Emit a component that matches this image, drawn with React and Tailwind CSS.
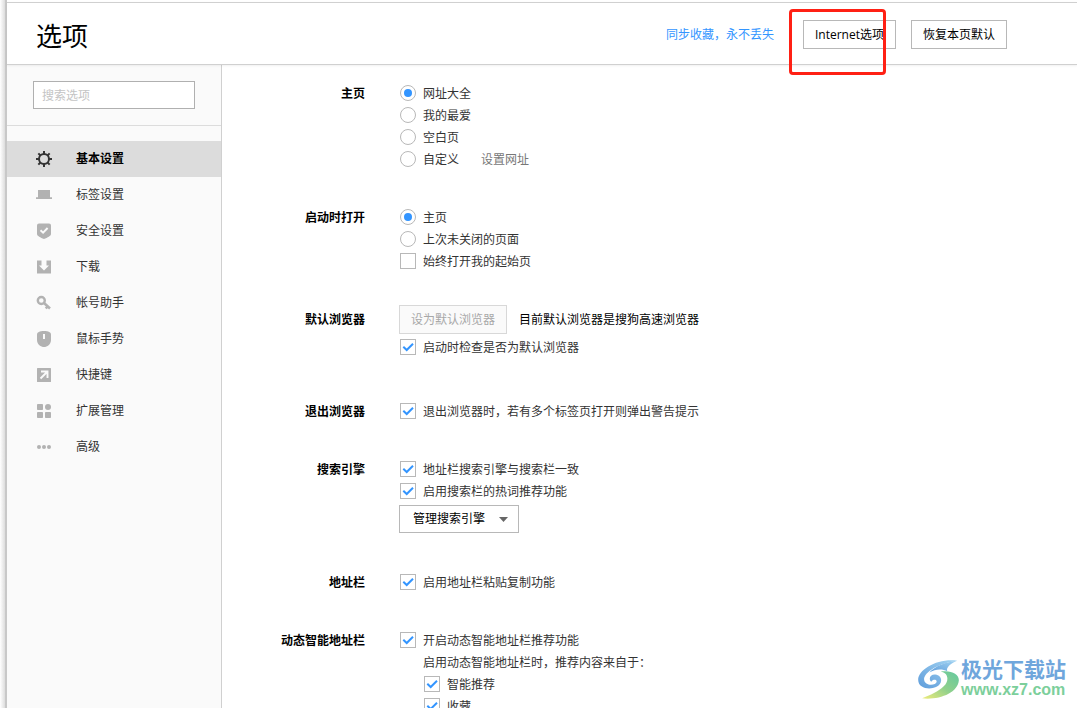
import React, { useState } from 'react';

const menuItems = [
  { id: 'basic', label: '基本设置' },
  { id: 'tabs', label: '标签设置' },
  { id: 'security', label: '安全设置' },
  { id: 'download', label: '下载' },
  { id: 'account', label: '帐号助手' },
  { id: 'mouse', label: '鼠标手势' },
  { id: 'shortcut', label: '快捷键' },
  { id: 'extension', label: '扩展管理' },
  { id: 'advanced', label: '高级' }
];

const MenuIcon = ({ id }) => (
  <svg viewBox="0 0 16 16" fill="currentColor" className="w-4 h-4" aria-hidden="true">
    {id === 'basic' && (
      <>
        <circle cx="8" cy="8" r="5" fill="none" stroke="currentColor" strokeWidth="2" />
        {[0, 45, 90, 135, 180, 225, 270, 315].map(angle => (
          <rect key={angle} x="7" y="0" width="2" height="3" transform={`rotate(${angle} 8 8)`} />
        ))}
      </>
    )}
    {id === 'tabs' && <path d="M2 3h12v7.300h2V12H0v-1.700h2z" />}
    {id === 'security' && (
      <>
        <path d="M3 0.500h10a2 2 0 0 1 2 2V11c0 2-3.500 3.600-7 5-3.500-1.400-7-3-7-5V2.500a2 2 0 0 1 2-2z" />
        <path d="M4.500 7.200l2.600 2.500 4.500-4.700" fill="none" stroke="#fafafa" strokeWidth="1.900" />
      </>
    )}
    {id === 'download' && <path d="M1 1.500h4.500V6.500H3L8 11.500 13 6.500h-2.500V1.500H15v13H1z" />}
    {id === 'account' && (
      <>
        <circle cx="5.300" cy="5.500" r="3.500" fill="none" stroke="currentColor" strokeWidth="2.400" />
        <path d="M8 8l6 5.500M11.500 11.500l-1.700 2" fill="none" stroke="currentColor" strokeWidth="2.600" />
      </>
    )}
    {id === 'mouse' && (
      <>
        <path d="M1 3.500C1 1.500 3.500 0 8 0s7 1.500 7 3.500V9c0 4.500-4 7-7 7s-7-2.500-7-7z" />
        <rect x="7" y="3" width="2" height="5" fill="#fafafa" />
      </>
    )}
    {id === 'shortcut' && (
      <>
        <rect x="1" y="1" width="14" height="14" rx="0.500" />
        <path d="M5 4.500h6.500V11M11 5l-6.500 6.500" fill="none" stroke="#fafafa" strokeWidth="1.900" />
      </>
    )}
    {id === 'extension' && (
      <>
        <rect x="1" y="1" width="6" height="6" rx="0.800" />
        <circle cx="12" cy="4" r="3" />
        <rect x="1" y="9" width="6" height="6" rx="0.800" />
        <rect x="9" y="9" width="6" height="6" rx="0.800" />
      </>
    )}
    {id === 'advanced' && (
      <>
        <circle cx="3" cy="8" r="2" />
        <circle cx="8" cy="8" r="2" />
        <circle cx="13" cy="8" r="2" />
      </>
    )}
  </svg>
);

const Radio = ({ name, label, defaultChecked }) => (
  <label className="flex items-center gap-[7px] h-[22px] pl-px">
    <span className="grid">
      <input
        type="radio"
        name={name}
        defaultChecked={defaultChecked}
        className="peer col-start-1 row-start-1 appearance-none w-4 h-4 rounded-full border border-[#b8b8b8] bg-white"
      />
      <svg viewBox="0 0 16 16" className="col-start-1 row-start-1 w-4 h-4 hidden peer-checked:block pointer-events-none">
        <circle cx="8" cy="8" r="4" fill="#3395ff" />
      </svg>
    </span>
    <span className="pt-0.5">{label}</span>
  </label>
);

const Checkbox = ({ label, defaultChecked }) => (
  <label className="flex items-center gap-[7px] h-[22px] pl-px">
    <span className="grid">
      <input
        type="checkbox"
        defaultChecked={defaultChecked}
        className="peer col-start-1 row-start-1 appearance-none w-4 h-4 border border-[#b8b8b8] bg-white"
      />
      <svg viewBox="0 0 16 16" className="col-start-1 row-start-1 w-4 h-4 hidden peer-checked:block pointer-events-none">
        <path d="M3.300 7.700l3.400 3.300 6.300-6.300" fill="none" stroke="#3395ff" strokeWidth="2" />
      </svg>
    </span>
    <span className="pt-0.5">{label}</span>
  </label>
);

const Section = ({ title, className, children }) => (
  <section className={`flex items-start gap-[34px] ${className || ''}`}>
    <h2 className="w-[143px] h-[22px] shrink-0 text-right font-bold text-black leading-6">{title}</h2>
    <div>{children}</div>
  </section>
);

const Header = () => (
  <header className="relative z-10 flex items-center h-[63px] mt-0.5 pt-0.5 pl-[29px] pr-[70px] bg-white border-y border-[#d0d0d0] shadow-[0_1px_2px_rgba(0,0,0,0.06)]">
    <h1 className="pt-0.5 text-[26px] leading-8 text-black">选项</h1>
    <a href="#sync" className="ml-auto text-[#3395ff]">同步收藏，永不丢失</a>
    <div className="relative ml-[29px]">
      <button className="block w-[93px] h-[29px] border border-[#b8b8b8] bg-white text-black">Internet选项</button>
      <div className="absolute -left-3.5 -top-[11px] w-[97px] h-[66px] border-3 border-[#ff2014] rounded-sm pointer-events-none" />
    </div>
    <button className="ml-[15px] w-24 h-[29px] border border-[#b8b8b8] bg-white text-black">恢复本页默认</button>
  </header>
);

const Sidebar = () => {
  const [active, setActive] = useState('basic');

  return (
    <aside className="w-[215px] shrink-0 bg-[#fafafa] border-r border-[#d0d0d0]">
      <div className="px-[26px] py-4 border-b border-[#dcdcdc]">
        <input
          type="text"
          aria-label="搜索选项"
          placeholder="搜索选项"
          className="block w-full h-7 px-2 border border-[#b0b0b0] bg-white placeholder:text-[#c4c4c4] outline-none"
        />
      </div>
      <nav className="mt-[15px]">
        {menuItems.map(item => (
          <button
            key={item.id}
            onClick={() => setActive(item.id)}
            className={`flex items-center gap-6 w-full h-9 pl-[29px] ${
              item.id === active ? 'bg-[#dcdcdc] font-bold text-black' : ''
            }`}
          >
            <span className={item.id === active ? 'text-[#333333]' : 'text-[#b2b2b2]'}>
              <MenuIcon id={item.id} />
            </span>
            {item.label}
          </button>
        ))}
      </nav>
    </aside>
  );
};

const Watermark = () => (
  <div className="absolute right-[11px] bottom-2 z-20 flex items-center gap-0.5 pointer-events-none">
    <svg viewBox="0 0 123 118" className="w-[41px] h-[39px]" aria-hidden="true">
      <defs>
        <linearGradient id="swirlBlue" x1="1" y1="0" x2="0" y2="1">
          <stop offset="0" stopColor="#a3d4f2" />
          <stop offset="1" stopColor="#5f9ddb" />
        </linearGradient>
        <linearGradient id="swirlGreen" x1="1" y1="0" x2="0" y2="1">
          <stop offset="0" stopColor="#62c8a0" />
          <stop offset="0.5" stopColor="#8fd08c" />
          <stop offset="1" stopColor="#f0ec7a" />
        </linearGradient>
      </defs>
      <path d="M118 2C60-6 0 28 0 60c0 26 34 31 54 22 22-10 20-36-2-38-16-1-22 14-12 22 4-8 16-8 16 0-2 12-36 14-38-6C16 38 60 10 118 2z" fill="url(#swirlBlue)" />
      <path d="M118 2C84 6 50 18 34 38c18-12 40-12 54-4-4-12 10-24 30-32z" fill="url(#swirlBlue)" />
      <path d="M68 35c24 4 26 28 10 44-16 17-42 27-66 37 50 6 108-16 111-54 1-20-23-32-55-27z" fill="url(#swirlGreen)" />
    </svg>
    <div>
      <div className="text-[21px] leading-[22px] font-bold text-[#6fa6dc]">极光下载站</div>
      <div className="font-['Liberation_Sans'] text-base leading-5 font-bold text-[#7ccf9b]">www.xz7.com</div>
    </div>
  </div>
);

export default function App() {
  return (
    <div className="relative flex h-screen overflow-hidden bg-white font-['Open_Sans','Noto_Sans_CJK_SC',sans-serif] text-xs text-[#333333]">
      {/* window edge */}
      <div className="w-[7px] shrink-0 border-r-2 border-[#c8c8c8] bg-linear-to-r from-white to-[#dddddd]" />
      <div className="flex flex-col flex-1 min-w-0">
        <Header />
        <div className="flex flex-1 min-h-0">
          <Sidebar />
          <main className="flex-1 overflow-hidden pt-[17px]">
            <Section title="主页">
              <Radio name="home" label="网址大全" defaultChecked />
              <Radio name="home" label="我的最爱" />
              <Radio name="home" label="空白页" />
              <div className="flex items-center gap-[22px]">
                <Radio name="home" label="自定义" />
                <a href="#url" className="pt-0.5 text-[#777777]">设置网址</a>
              </div>
            </Section>

            <Section title="启动时打开" className="mt-9">
              <Radio name="startup" label="主页" defaultChecked />
              <Radio name="startup" label="上次未关闭的页面" />
              <Checkbox label="始终打开我的起始页" />
            </Section>

            <Section title="默认浏览器" className="mt-[33px] [&>h2]:leading-[29px]">
              <div className="flex items-center gap-3 mb-0.5">
                <button disabled className="w-[108px] h-[29px] border border-[#d8d8d8] bg-[#fafafa] text-[#a8a8a8]">设为默认浏览器</button>
                <span className="text-black">目前默认浏览器是搜狗高速浏览器</span>
              </div>
              <Checkbox label="启动时检查是否为默认浏览器" defaultChecked />
            </Section>

            <Section title="退出浏览器" className="mt-[42px]">
              <Checkbox label="退出浏览器时，若有多个标签页打开则弹出警告提示" defaultChecked />
            </Section>

            <Section title="搜索引擎" className="mt-9">
              <Checkbox label="地址栏搜索引擎与搜索栏一致" defaultChecked />
              <Checkbox label="启用搜索栏的热词推荐功能" defaultChecked />
              <div className="grid items-center w-[120px] mt-[3px]">
                <select
                  aria-label="管理搜索引擎"
                  className="col-start-1 row-start-1 appearance-none w-full h-7 pl-[13px] border border-[#b8b8b8] bg-white text-black"
                >
                  <option>管理搜索引擎</option>
                </select>
                <svg viewBox="0 0 9 5" className="col-start-1 row-start-1 justify-self-end w-[9px] h-[5px] mr-[11px] pointer-events-none">
                  <path d="M0 0h9L4.500 5z" fill="#666666" />
                </svg>
              </div>
            </Section>

            <Section title="地址栏" className="mt-[38px]">
              <Checkbox label="启用地址栏粘贴复制功能" defaultChecked />
            </Section>

            <Section title="动态智能地址栏" className="mt-9">
              <Checkbox label="开启动态智能地址栏推荐功能" defaultChecked />
              <div className="pl-6">
                <p className="h-[22px] leading-6">启用动态智能地址栏时，推荐内容来自于：</p>
                <Checkbox label="智能推荐" defaultChecked />
                <Checkbox label="收藏" defaultChecked />
              </div>
            </Section>
          </main>
        </div>
      </div>
      <Watermark />
    </div>
  );
}
